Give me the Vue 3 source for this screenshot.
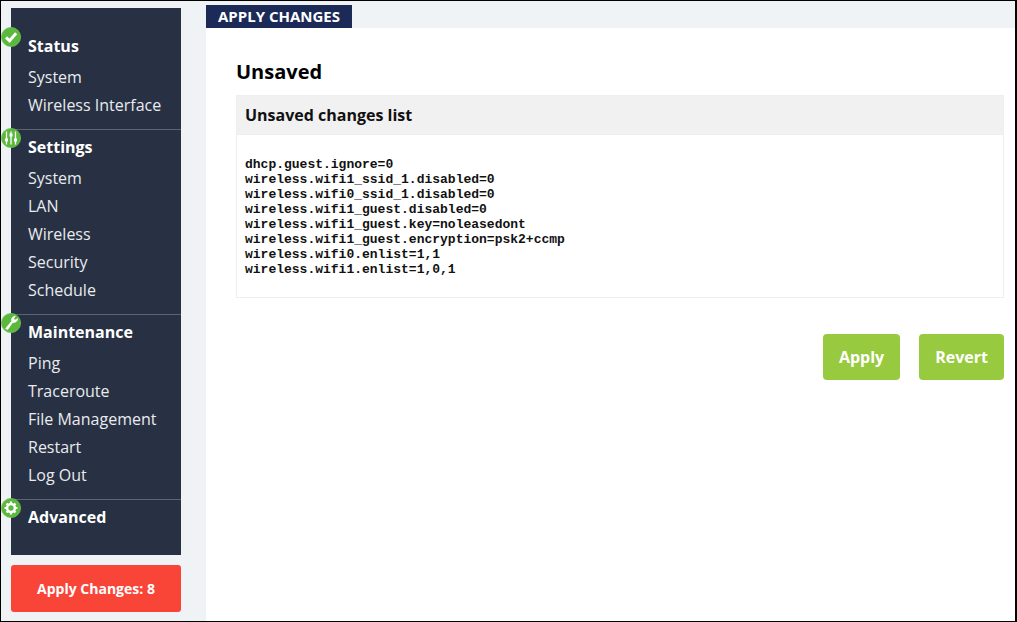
<script setup>
const sections = [
  { title: 'Status', icon: 'check', items: ['System', 'Wireless Interface'] },
  { title: 'Settings', icon: 'sliders', items: ['System', 'LAN', 'Wireless', 'Security', 'Schedule'] },
  { title: 'Maintenance', icon: 'wrench', items: ['Ping', 'Traceroute', 'File Management', 'Restart', 'Log Out'] },
  { title: 'Advanced', icon: 'gear', items: [] },
]
const changes = [
  'dhcp.guest.ignore=0',
  'wireless.wifi1_ssid_1.disabled=0',
  'wireless.wifi0_ssid_1.disabled=0',
  'wireless.wifi1_guest.disabled=0',
  'wireless.wifi1_guest.key=noleasedont',
  'wireless.wifi1_guest.encryption=psk2+ccmp',
  'wireless.wifi0.enlist=1,1',
  'wireless.wifi1.enlist=1,0,1',
]
</script>

<template>
  <div class="page">
    <aside class="side">
      <nav class="menu">
        <section v-for="s in sections" :key="s.title" class="group">
          <h3 class="group-title">
            <svg class="badge" viewBox="0 0 20 20">
              <circle cx="10" cy="10" r="9.6" fill="#5cb83c" stroke="#6fc254" stroke-width=".8" />
              <path v-if="s.icon === 'check'" d="M5 10.4l3.5 3.5 6.6-7.6" fill="none" stroke="#fff" stroke-width="2.9" />
              <g v-else-if="s.icon === 'sliders'" stroke="#fff" fill="none">
                <path d="M5.5 3.5v13M10 3.5v13M14.5 3.5v13" stroke-width="1.3" />
                <path d="M5.5 10.5v3M10 5.5v3M14.5 10.5v3" stroke-width="3" />
              </g>
              <path v-else-if="s.icon === 'wrench'" d="M4.6 15.5l6.2-7.3a3.7 3.7 0 0 1 1.2-4.3l2.3-.9-1.7 2.9 1.4 1.4 2.6-1.6a3.9 3.9 0 0 1-4.9 3.6l-5.1 7.2z" fill="#fff" stroke="#fff" stroke-width=".8" />
              <g v-else>
                <circle cx="10" cy="10" r="3.9" fill="none" stroke="#fff" stroke-width="2.5" />
                <path d="M10 3.6v3M10 13.4v3M3.6 10h3M13.4 10h3M5.5 5.5l2.1 2.1M12.4 12.4l2.1 2.1M14.5 5.5l-2.1 2.1M7.6 12.4l-2.1 2.1" stroke="#fff" stroke-width="2.2" />
              </g>
            </svg>
            {{ s.title }}
          </h3>
          <ul v-if="s.items.length" class="items">
            <li v-for="item in s.items" :key="item">{{ item }}</li>
          </ul>
        </section>
      </nav>
      <button class="pending">Apply Changes: 8</button>
    </aside>

    <main class="main">
      <div class="tabs"><span class="tab">APPLY CHANGES</span></div>
      <div class="content">
        <h1 class="heading">Unsaved</h1>
        <div class="card">
          <div class="card-head">Unsaved changes list</div>
          <pre class="card-body"><code v-for="c in changes" :key="c" class="line">{{ c }}</code></pre>
        </div>
        <div class="actions">
          <button class="btn apply">Apply</button>
          <button class="btn">Revert</button>
        </div>
      </div>
    </main>
  </div>
</template>

<style>
html, body { margin: 0; padding: 0; }
</style>

<style scoped>
.page {
  box-sizing: border-box;
  width: 1017px;
  height: 622px;
  display: flex;
  overflow: hidden;
  background: #eff3f6;
  border: 1px solid #000;
  border-right-width: 2px;
  font-family: "Open Sans", sans-serif;
}
.side {
  width: 170px;
  margin: 7px 0 0 10px;
  display: flex;
  flex-direction: column;
  gap: 10px;
  flex: none;
}
.menu {
  box-sizing: border-box;
  height: 547px;
  padding: 21px 0 0;
  background: #283143;
  color: #e9ebee;
}
.group {
  padding-bottom: 10px;
  border-bottom: 1px solid #5d6471;
}
.group + .group { padding-top: 5px; }
.group:first-child { padding-top: 5px; }
.group:last-child { border-bottom: 0; }
.group-title {
  position: relative;
  margin: 0;
  padding-left: 17px;
  font-size: 16px;
  line-height: 24px;
  font-weight: 700;
  color: #fff;
}
.badge {
  position: absolute;
  left: -10px;
  top: -7px;
  width: 20px;
  height: 20px;
}
.items {
  list-style: none;
  margin: 5px 0 0;
  padding: 0 0 0 17px;
  font-size: 16px;
  line-height: 28px;
}
.pending {
  height: 47px;
  border: 0;
  border-radius: 3px;
  background: #f94438;
  color: #fff;
  font: 700 14px "Open Sans", sans-serif;
  padding: 0;
}
.main {
  flex: 1;
  margin-left: 25px;
  display: flex;
  flex-direction: column;
}
.tabs {
  padding-top: 4px;
  display: flex;
}
.tab {
  background: #1b2a57;
  color: #fff;
  font-size: 15px;
  font-weight: 700;
  line-height: 23px;
  padding: 0 12px;
}
.content {
  flex: 1;
  background: #fff;
  padding: 30px 11px 0 30px;
}
.heading {
  margin: 0 0 9px;
  font-size: 20px;
  line-height: 28px;
  font-weight: 700;
  color: #000;
}
.card {
  border: 1px solid #eeeeee;
}
.card-head {
  background: #f1f1f1;
  height: 38px;
  line-height: 38px;
  padding-left: 8px;
  font-size: 16px;
  font-weight: 700;
  color: #111;
  border-bottom: 1px solid #eeeeee;
  box-sizing: content-box;
}
.card-body {
  margin: 0;
  padding: 22px 8px 20px;
}
.line {
  display: block;
  font-family: "Liberation Mono", monospace;
  font-size: 13px;
  font-weight: 700;
  line-height: 15px;
  color: #111;
}
.actions {
  display: flex;
  justify-content: flex-end;
  gap: 19px;
  margin-top: 36px;
}
.btn {
  height: 46px;
  padding: 0 16px;
  border: 0;
  border-radius: 4px;
  background: #98ca3f;
  color: #fff;
  font: 700 16px "Open Sans", sans-serif;
}
</style>
